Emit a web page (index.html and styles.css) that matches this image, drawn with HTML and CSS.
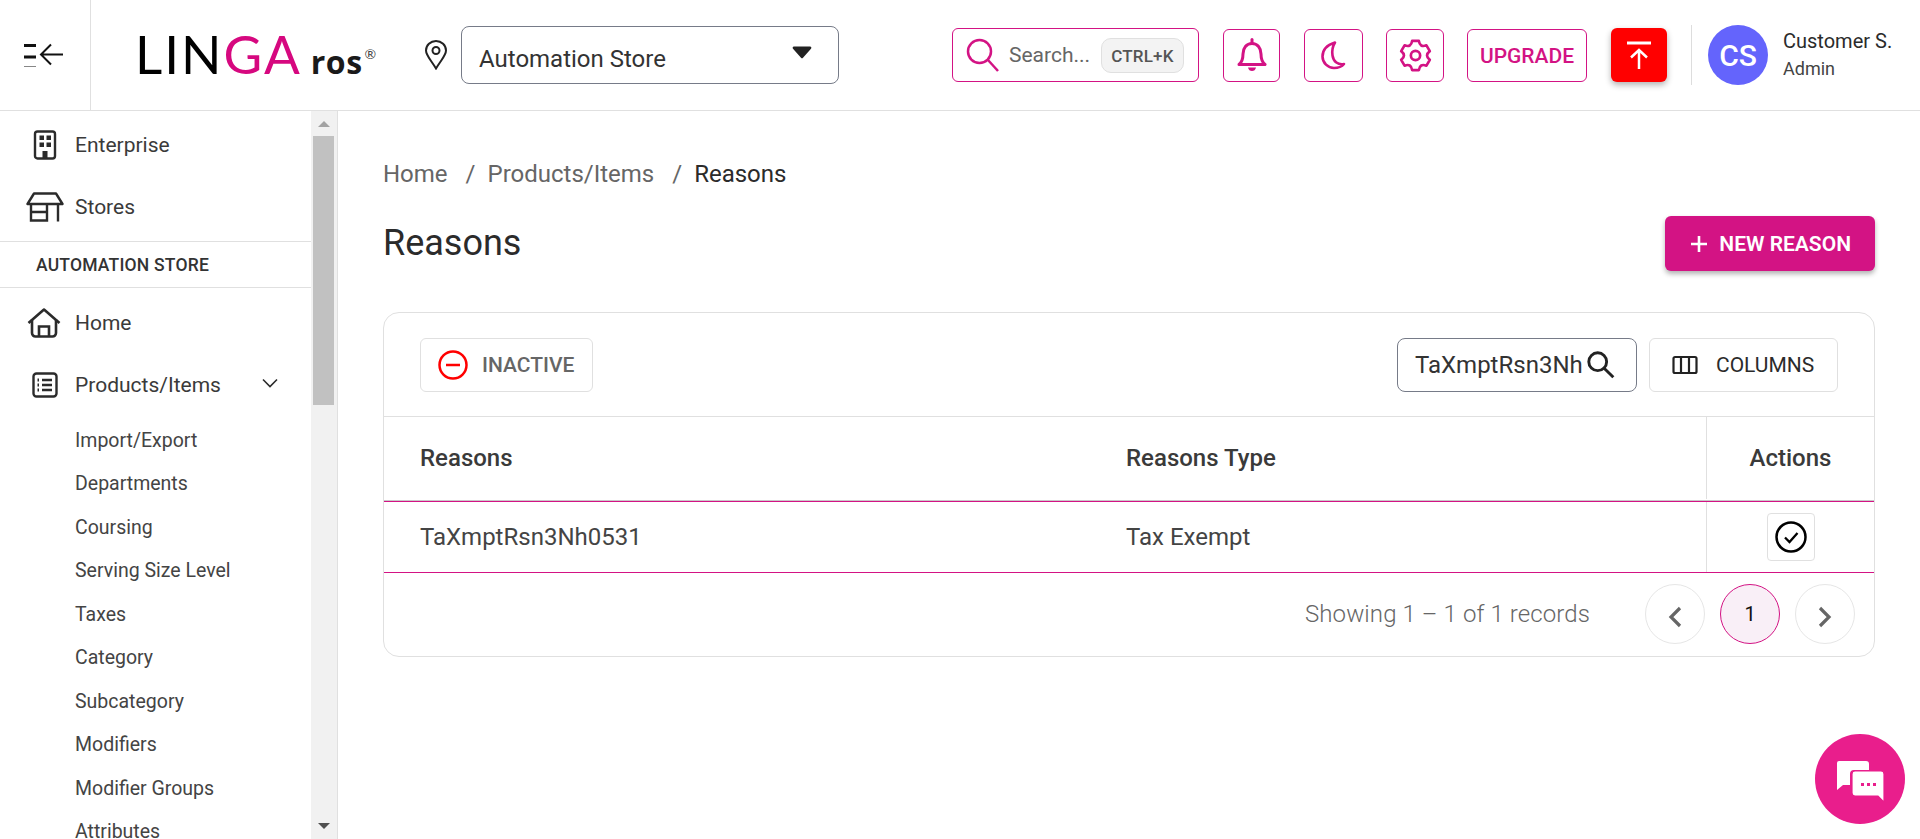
FILE: index.html
```html
<!DOCTYPE html>
<html lang="en">
<head>
    <meta charset="UTF-8">
    <meta name="viewport" content="width=device-width, initial-scale=1.0">
    <title>Reasons</title>
    <link rel="stylesheet" href="styles.css">
</head>
<body>
    <header class="topbar">
        <div class="toggle-cell">
            <svg width="40" height="24" viewBox="0 0 40 24" fill="none" stroke="#111" stroke-width="2">
                <path d="M0 2.500h12M0 14h12M0 25h12" stroke-width="3"/>
                <path d="M39 11.500H18M27 1.500L17 11.500l10 10"/>
            </svg>
        </div>
        <div class="logo">
            <span class="logo-black">LIN</span><span class="logo-pink">GA</span>
            <span class="logo-ros">ros</span><span class="logo-reg">®</span>
        </div>
        <svg class="pin" width="24" height="30" viewBox="0 0 24 30" fill="none" stroke="#222" stroke-width="2">
            <path d="M12 28.500C7 20 2 15.500 2 10.500a10 9.500 0 0 1 20 0C22 15.500 17 20 12 28.500z"/>
            <circle cx="12" cy="10.500" r="3.500"/>
        </svg>
        <div class="store-select">
            <span>Automation Store</span>
            <svg width="20" height="14" viewBox="0 0 20 14"><path d="M2 1.500h16a1.300 1.300 0 0 1 1 2.200L11 12.700a1.300 1.300 0 0 1-2 0L1 3.700a1.300 1.300 0 0 1 1-2.200z" fill="#222"/></svg>
        </div>

        <div class="top-actions">
            <div class="top-search">
                <svg width="36" height="36" viewBox="0 0 36 36" fill="none" stroke="#d31384" stroke-width="2.500">
                    <circle cx="14.500" cy="14.500" r="11.500"/>
                    <path d="M23 23l10 11"/>
                </svg>
                <span class="top-search-text">Search...</span>
                <span class="kbd">CTRL+K</span>
            </div>
            <div class="icon-btn bell-btn">
                <svg width="30" height="34" viewBox="0 0 30 34" fill="none" stroke="#d31384" stroke-width="3">
                    <path d="M2 26.500c3-2.500 4-5 4-10.500C6 10 9.500 5.500 15 5.500S24 10 24 16c0 5.500 1 8 4 10.500z" stroke-linejoin="round"/>
                    <path d="M15 1.500v4" stroke-linecap="round"/>
                    <path d="M11 29.500h8c-.5 2.500-2 3.500-4 3.500s-3.500-1-4-3.500z" fill="#d31384" stroke="none"/>
                </svg>
            </div>
            <div class="icon-btn moon-btn">
                <svg width="25" height="29" viewBox="0 0 25 29" fill="none" stroke="#d31384" stroke-width="2.600" stroke-linejoin="round">
                    <path d="M14 1.500C6 4 1.500 9 1.500 15.500 1.500 22 7 27 13 27c4.500 0 8-1.500 10-4-6 1-10.500-2-11.500-8.500C10.800 10 11.500 5.500 14 1.500z"/>
                </svg>
            </div>
            <div class="icon-btn gear-btn">
                <svg width="33" height="33" viewBox="0 0 32 32" fill="none" stroke="#d31384" stroke-width="2.600" stroke-linejoin="round">
                    <path d="M12.740 1.870L19.260 1.870Q20.250 8.640 26.600 6.110L29.870 11.760Q24.500 16 29.870 20.240L26.600 25.890Q20.250 23.360 19.260 30.130L12.740 30.130Q11.750 23.360 5.400 25.890L2.130 20.240Q7.500 16 2.130 11.760L5.400 6.110Q11.750 8.640 12.740 1.870z"/>
                    <circle cx="16" cy="16" r="4.500"/>
                </svg>
            </div>
            <div class="upgrade-btn">UPGRADE</div>
            <div class="publish-btn">
                <svg width="26" height="30" viewBox="0 0 26 30" fill="none" stroke="#fff" stroke-width="3">
                    <path d="M1 3h24" />
                    <path d="M13 29V11M5 17.500L13 10l8 7.500" stroke-width="2.500"/>
                </svg>
            </div>
            <div class="user-box">
                <div class="avatar">CS</div>
                <div class="user-text">
                    <div class="user-name">Customer S.</div>
                    <div class="user-role">Admin</div>
                </div>
            </div>
        </div>
    </header>

    <div class="page">
        <aside class="sidebar">
            <nav class="side-nav">
                <div class="side-item first">
                    <svg width="24" height="30" viewBox="0 0 24 30" fill="none" stroke="#2b2b2b" stroke-width="2.400">
                        <rect x="2" y="1.500" width="20" height="27" rx="2.500"/>
                        <path d="M6.500 5.500h4.500v4.500H6.500zM13.500 5.500h4.500v4.500h-4.500zM6.500 12.500h4.500V17H6.500zM13.500 12.500h4.500V17h-4.500zM9.500 28v-7h5v7z" fill="#2b2b2b" stroke="none"/>
                    </svg>
                    <span>Enterprise</span>
                </div>
                <div class="side-item stores">
                    <svg width="38" height="30" viewBox="0 0 38 30" fill="none" stroke="#2b2b2b" stroke-width="2.400">
                        <path d="M1.500 12L8 1.500h22L36.500 12z" stroke-linejoin="round"/>
                        <path d="M5 12v16.500h16V12M5 20h16M32 12v17.500"/>
                    </svg>
                    <span>Stores</span>
                </div>
                <div class="side-heading">AUTOMATION STORE</div>
                <div class="side-item home">
                    <svg width="34" height="30" viewBox="0 0 34 30" fill="none" stroke="#2b2b2b" stroke-width="2.600">
                        <path d="M1.500 15L17 1.500 32.500 15" stroke-linejoin="round"/>
                        <path d="M5 11.500V25a3.500 3.500 0 0 0 3.500 3.500h17A3.500 3.500 0 0 0 29 25V11.500"/>
                        <path d="M12 28.500V18.500h10v10"/>
                    </svg>
                    <span>Home</span>
                </div>
                <div class="side-item products">
                    <svg width="26" height="26" viewBox="0 0 26 26" fill="none" stroke="#2b2b2b" stroke-width="2.400">
                        <rect x="1.500" y="1.500" width="23" height="23" rx="3"/>
                        <path d="M10 8h10M10 13h10M10 18h10"/>
                        <path d="M5.500 8h1.500M5.500 13h1.500M5.500 18h1.500" stroke-width="2.800"/>
                    </svg>
                    <span>Products/Items</span>
                    <svg class="chev" width="16" height="10" viewBox="0 0 16 10" fill="none" stroke="#2b2b2b" stroke-width="1.600"><path d="M1 1.500l7 7 7-7"/></svg>
                </div>
                <ul class="side-sub">
                    <li>Import/Export</li>
                    <li>Departments</li>
                    <li>Coursing</li>
                    <li>Serving Size Level</li>
                    <li>Taxes</li>
                    <li>Category</li>
                    <li>Subcategory</li>
                    <li>Modifiers</li>
                    <li>Modifier Groups</li>
                    <li>Attributes</li>
                </ul>
            </nav>
            <div class="side-scroll">
                <div class="arrow-up"></div>
                <div class="thumb"></div>
                <div class="arrow-down"></div>
            </div>
        </aside>

        <main class="content">
            <div class="crumbs">
                <span>Home</span><span class="sep">/</span><span>Products/Items</span><span class="sep">/</span><span class="current">Reasons</span>
            </div>
            <div class="title-row">
                <h1>Reasons</h1>
                <button class="new-btn">
                    <svg width="20" height="20" viewBox="0 0 20 20" stroke="#fff" stroke-width="2.600"><path d="M10 2v16M2 10h16"/></svg>
                    NEW REASON
                </button>
            </div>

            <section class="card">
                <div class="toolbar">
                    <div class="inactive-btn">
                        <svg width="30" height="30" viewBox="0 0 30 30" fill="none" stroke="#f00" stroke-width="2.500">
                            <circle cx="15" cy="15" r="13.500"/>
                            <path d="M8 15h14"/>
                        </svg>
                        INACTIVE
                    </div>
                    <div class="toolbar-right">
                        <div class="table-search">
                            <span>TaXmptRsn3Nh</span>
                            <svg width="29" height="29" viewBox="0 0 26 26" fill="none" stroke="#222" stroke-width="2.600">
                                <circle cx="10.500" cy="10.500" r="8"/>
                                <path d="M16.500 16.500l8 8"/>
                            </svg>
                        </div>
                        <div class="columns-btn">
                            <svg width="26" height="20" viewBox="0 0 26 20" fill="none" stroke="#222" stroke-width="2.200">
                                <rect x="1.500" y="2" width="23" height="16" rx="1.500"/>
                                <path d="M9 2v16M17 2v16"/>
                            </svg>
                            COLUMNS
                        </div>
                    </div>
                </div>

                <div class="table-row head-row">
                    <div class="col-name">Reasons</div>
                    <div class="col-type">Reasons Type</div>
                    <div class="col-actions">Actions</div>
                </div>
                <div class="table-row body-row">
                    <div class="col-name">TaXmptRsn3Nh0531</div>
                    <div class="col-type">Tax Exempt</div>
                    <div class="col-actions">
                        <div class="check-btn">
                            <svg width="32" height="32" viewBox="0 0 32 32" fill="none" stroke="#000" stroke-width="2.500">
                                <circle cx="16" cy="16" r="14.500"/>
                                <path d="M10 16.500l4.500 4.500 8-9" stroke-width="2.300"/>
                            </svg>
                        </div>
                    </div>
                </div>

                <div class="pager">
                    <span class="pager-text">Showing 1 – 1 of 1 records</span>
                    <div class="page-btn">
                        <svg width="14" height="22" viewBox="0 0 14 22" fill="none" stroke="#666" stroke-width="3.200"><path d="M12 2L3 11l9 9"/></svg>
                    </div>
                    <div class="page-btn active">1</div>
                    <div class="page-btn">
                        <svg width="14" height="22" viewBox="0 0 14 22" fill="none" stroke="#666" stroke-width="3.200"><path d="M2 2l9 9-9 9"/></svg>
                    </div>
                </div>
            </section>
        </main>
    </div>

    <div class="chat-bubble">
        <svg width="48" height="44" viewBox="0 0 48 44">
            <path d="M3 1h27a3 3 0 0 1 3 3v6H18a4 4 0 0 0-4 4v11H7l-6 5V3a2 2 0 0 1 2-2z" fill="#fff"/>
            <path d="M19 11h26a3 3 0 0 1 3 3v28l-6-6H19a3 3 0 0 1-3-3V14a3 3 0 0 1 3-3z" fill="#fff" stroke="#e91e8c" stroke-width="1.200"/>
            <path d="M25 23h3v3h-3zM31 23h3v3h-3zM37 23h3v3h-3z" fill="#e91e8c"/>
        </svg>
    </div>
</body>
</html>
```

FILE: styles.css
```css
* {
    box-sizing: border-box;
}

html, body {
    height: 100%;
}

body {
    margin: 0;
    font-family: Roboto, Arial, sans-serif;
    color: #2b2b2b;
    background-color: #fff;
    overflow: hidden;
}

/* top bar */
.topbar {
    display: flex;
    align-items: center;
    height: 111px;
    border-bottom: 1px solid #e0e0e0;
}

.toggle-cell {
    display: flex;
    align-items: center;
    width: 91px;
    height: 110px;
    padding-left: 24px;
    border-right: 1px solid #e0e0e0;
    flex-shrink: 0;
}

.logo {
    display: flex;
    align-items: baseline;
    width: 289px;
    margin: -4px 0 0 44px;
    font-family: Lato, sans-serif;
    font-size: 53px;
    font-weight: 400;
    line-height: 1;
    color: #000;
    letter-spacing: 2px;
}

.logo-pink {
    color: #d6087f;
}

.logo-ros {
    margin-left: 9px;
    font-family: "Open Sans", sans-serif;
    font-size: 32px;
    font-weight: 700;
    letter-spacing: 0.5px;
    color: #1a1a1a;
}

.logo-reg {
    margin-left: 2px;
    font-size: 14px;
    font-weight: 400;
    letter-spacing: 0;
    color: #444;
    align-self: center;
    margin-top: 2px;
}

.pin {
    flex-shrink: 0;
}

.store-select {
    display: flex;
    align-items: center;
    justify-content: space-between;
    width: 378px;
    height: 58px;
    margin-left: 13px;
    padding: 8px 26px 0 17px;
    border: 1px solid #767b88;
    border-radius: 8px;
    font-size: 24px;
    color: #333;
}

.store-select svg {
    margin-top: -14px;
}

.top-actions {
    display: flex;
    align-items: center;
    margin-left: 113px;
}

.top-search {
    display: flex;
    align-items: center;
    width: 247px;
    height: 54px;
    padding: 0 10px 0 12px;
    border: 1px solid #d31384;
    border-radius: 6px;
}

.top-search-text {
    margin-left: 8px;
    font-size: 21px;
    color: #666;
}

.kbd {
    margin-left: 11px;
    padding: 7px 9px 6px;
    font-size: 17px;
    font-weight: 500;
    color: #555;
    background-color: #f3f3f3;
    border: 1px solid #e0e0e0;
    border-radius: 10px;
    letter-spacing: 0.2px;
}

.icon-btn {
    display: flex;
    align-items: center;
    justify-content: center;
    height: 53px;
    border: 1px solid #d31384;
    border-radius: 6px;
}

.bell-btn {
    width: 57px;
    margin-left: 24px;
}

.moon-btn {
    width: 59px;
    margin-left: 24px;
}

.gear-btn {
    width: 58px;
    margin-left: 23px;
}

.upgrade-btn {
    display: flex;
    align-items: center;
    justify-content: center;
    width: 120px;
    height: 53px;
    margin-left: 23px;
    padding-top: 1px;
    font-size: 21px;
    font-weight: 500;
    color: #d31384;
    border: 1px solid #d31384;
    border-radius: 6px;
}

.publish-btn {
    display: flex;
    align-items: center;
    justify-content: center;
    width: 56px;
    height: 54px;
    margin-left: 24px;
    background-color: #f00;
    border-radius: 6px;
    box-shadow: 0 3px 6px rgba(0, 0, 0, 0.3);
}

.user-box {
    display: flex;
    align-items: center;
    height: 60px;
    margin-left: 24px;
    padding-left: 16px;
    border-left: 1px solid #ddd;
}

.avatar {
    display: flex;
    align-items: center;
    justify-content: center;
    width: 60px;
    height: 60px;
    font-size: 30px;
    font-weight: 500;
    color: #fff;
    background-color: #6464fc;
    border-radius: 50%;
}

.user-text {
    margin: -3px 0 0 15px;
    white-space: nowrap;
}

.user-name {
    font-size: 20px;
    line-height: 26px;
}

.user-role {
    margin-top: 4px;
    font-size: 18px;
    line-height: 22px;
    color: #444;
}

/* sidebar + content */
.page {
    display: flex;
    height: 728px;
}

.sidebar {
    display: flex;
    width: 338px;
    flex-shrink: 0;
    border-right: 1px solid #e0e0e0;
    overflow: hidden;
}

.side-nav {
    width: 311px;
    height: 728px;
    overflow: hidden;
    font-size: 21px;
    color: #3a3a3a;
}

.side-item {
    display: flex;
    align-items: center;
    height: 60px;
    padding-left: 75px;
    position: relative;
}

.side-item svg:first-child {
    position: absolute;
    left: 27px;
    top: 50%;
    transform: translate(0, -50%);
}

.side-item.first {
    height: 68px;
}

.side-item.first svg:first-child {
    left: 33px;
}

.side-item.stores {
    height: 56px;
}

.side-item.stores svg:first-child {
    left: 26px;
}

.side-item.home {
    margin-top: 5px;
}

.side-item.products {
    height: 64px;
}

.side-item.products svg:first-child {
    left: 32px;
}

.side-item .chev {
    position: absolute;
    left: 262px;
    top: 25px;
}

.side-heading {
    display: flex;
    align-items: center;
    height: 47px;
    margin-top: 6px;
    padding: 1px 0 0 36px;
    font-size: 17.500px;
    font-weight: 500;
    letter-spacing: 0.2px;
    color: #333;
    border-top: 1px solid #e0e0e0;
    border-bottom: 1px solid #e0e0e0;
}

.side-sub {
    list-style-type: none;
    margin: 1.500px 0 0;
    padding: 0 0 0 75px;
    font-size: 19.500px;
    color: #444;
}

.side-sub li {
    height: 43.500px;
    line-height: 43.500px;
}

.side-scroll {
    position: relative;
    width: 26px;
    background-color: #f1f1f1;
}

.thumb {
    position: absolute;
    top: 25px;
    left: 2px;
    width: 21px;
    height: 269px;
    background-color: #c1c1c1;
}

.arrow-up, .arrow-down {
    position: absolute;
    left: 7px;
    width: 0;
    height: 0;
    border-left: 6px solid transparent;
    border-right: 6px solid transparent;
}

.arrow-up {
    top: 10px;
    border-bottom: 6px solid #a3a3a3;
}

.arrow-down {
    bottom: 10px;
    border-top: 6px solid #505050;
}

.content {
    flex: 1;
    padding: 47px 45px 0;
}

.crumbs {
    display: flex;
    align-items: center;
    height: 32px;
    font-size: 24px;
    color: #666;
}

.crumbs .sep {
    margin: 0 12px 0 18px;
}

.crumbs .current {
    color: #2b2b2b;
}

.title-row {
    display: flex;
    align-items: center;
    justify-content: space-between;
    height: 55px;
    margin-top: 26px;
}

h1 {
    margin: 0 0 2px;
    font-size: 36px;
    font-weight: 400;
}

.new-btn {
    display: flex;
    align-items: center;
    gap: 10px;
    height: 55px;
    padding: 0 24px;
    font-family: Roboto, Arial, sans-serif;
    font-size: 21px;
    font-weight: 600;
    color: #fff;
    background-color: #d31384;
    border: none;
    border-radius: 6px;
    box-shadow: 0 3px 5px rgba(0, 0, 0, 0.3);
}

.card {
    margin-top: 41px;
    height: 345px;
    border: 1px solid #e0e0e0;
    border-radius: 16px;
}

.toolbar {
    display: flex;
    align-items: center;
    justify-content: space-between;
    height: 104px;
    padding: 0 36px;
    border-bottom: 1px solid #e0e0e0;
}

.inactive-btn {
    display: flex;
    align-items: center;
    gap: 14px;
    width: 173px;
    height: 54px;
    padding-left: 17px;
    font-size: 21px;
    font-weight: 500;
    color: #666;
    border: 1px solid #e0e0e0;
    border-radius: 6px;
}

.toolbar-right {
    display: flex;
    gap: 12px;
}

.table-search {
    display: flex;
    align-items: center;
    justify-content: space-between;
    width: 240px;
    height: 54px;
    padding: 0 21px 0 17px;
    font-size: 24px;
    color: #333;
    border: 1px solid #767b88;
    border-radius: 8px;
    overflow: hidden;
}

.columns-btn {
    display: flex;
    align-items: center;
    gap: 18px;
    width: 189px;
    height: 54px;
    padding-left: 22px;
    font-size: 21px;
    border: 1px solid #e0e0e0;
    border-radius: 6px;
}

.table-row {
    display: flex;
    font-size: 24px;
    border-bottom: 1px solid #d31384;
}

.head-row {
    height: 85px;
    padding-bottom: 2px;
    font-weight: 500;
    color: #3a3a3a;
    box-shadow: inset 0 -1px 0 #c8c8c8;
}

.body-row {
    height: 71px;
    color: #444;
}

.col-name {
    display: flex;
    align-items: center;
    width: 742px;
    padding-left: 36px;
}

.col-type {
    display: flex;
    align-items: center;
    flex: 1;
}

.col-actions {
    display: flex;
    align-items: center;
    justify-content: center;
    width: 168px;
    border-left: 1px solid #e0e0e0;
}

.check-btn {
    display: flex;
    align-items: center;
    justify-content: center;
    width: 48px;
    height: 48px;
    border: 1px solid #e0e0e0;
    border-radius: 4px;
}

.pager {
    display: flex;
    align-items: center;
    justify-content: flex-end;
    gap: 15px;
    height: 82px;
    padding-right: 19px;
}

.pager-text {
    margin-right: 40px;
    font-size: 24px;
    font-weight: 300;
    letter-spacing: 0.1px;
    color: #666;
}

.page-btn {
    display: flex;
    align-items: center;
    justify-content: center;
    width: 60px;
    height: 60px;
    font-size: 20px;
    border: 1px solid #e6e6e6;
    border-radius: 50%;
}

.page-btn svg {
    margin-top: 6px;
}

.page-btn.active {
    color: #111;
    background-color: #f9eff7;
    border-color: #d31384;
}

/* floating chat button */
.chat-bubble {
    position: fixed;
    left: 1815px;
    top: 734px;
    display: flex;
    align-items: center;
    justify-content: center;
    width: 90px;
    height: 90px;
    padding-top: 6px;
    background-color: #e91e8c;
    border-radius: 50%;
}
```
